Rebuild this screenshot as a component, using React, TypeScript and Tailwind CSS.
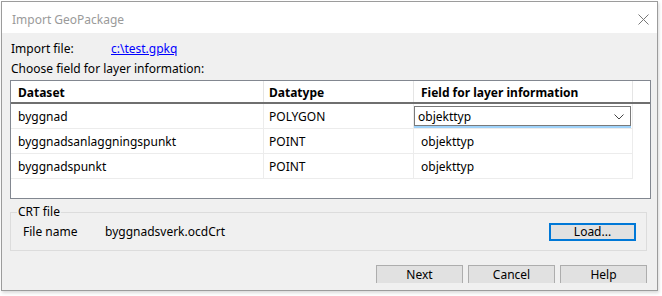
import React from "react";

const rows = [
  { name: "byggnad", type: "POLYGON", field: "objekttyp" },
  { name: "byggnadsanlaggningspunkt", type: "POINT", field: "objekttyp" },
  { name: "byggnadspunkt", type: "POINT", field: "objekttyp" },
];

function Chevron() {
  return (
    <svg width="10" height="6" viewBox="0 0 10 6" fill="none">
      <path d="M0.5 0.5 L5 5 L9.5 0.5" stroke="#444" strokeWidth="1" />
    </svg>
  );
}

function CloseIcon() {
  return (
    <svg width="11" height="11" viewBox="0 0 11 11" fill="none">
      <path d="M0.5 0.5 L10.5 10.5 M10.5 0.5 L0.5 10.5" stroke="#777" strokeWidth="1" />
    </svg>
  );
}

export default function App() {
  return (
    <div
      className="w-[662px] h-[296px] bg-white pl-[1px] pt-[1px] text-[12px] leading-[16px] text-black"
      style={{ fontFamily: '"Segoe UI", "Noto Sans", sans-serif' }}
    >
      <div className="w-[657px] h-[290px] border border-[#9c9c9c] flex flex-col shadow-[1px_2px_3px_rgba(0,0,0,0.15)]">
        {/* Title bar */}
        <div className="h-[31px] bg-white flex justify-between shrink-0">
          <div className="pl-[10px] pt-[10px] text-[#9a9a9a]">Import GeoPackage</div>
          <div className="pr-[8px] pt-[12px]">
            <CloseIcon />
          </div>
        </div>

        {/* Body */}
        <div className="flex-1 bg-[#f0f0f0] flex flex-col overflow-hidden">
          <div className="flex pl-[9px] pt-[8px]">
            <span className="w-[100px]">Import file:</span>
            <span className="text-[#0000ff] underline">c:\test.gpkq</span>
          </div>
          <div className="pl-[9px] mt-[4px]">Choose field for layer information:</div>

          {/* Table */}
          <div className="ml-[8px] mt-[3px] w-[641px] h-[119px] border border-[#828790] bg-white flex flex-col">
            <div className="flex h-[23px] border-b-2 border-[#6f6f6f] font-bold">
              <div className="w-[253px] border-r border-[#e5e5e5] pl-[7px] pt-[3px] flex items-center">Dataset</div>
              <div className="w-[150px] border-r border-[#e5e5e5] pl-[5px] pt-[3px] flex items-center">Datatype</div>
              <div className="w-[219px] border-r border-[#e5e5e5] pl-[7px] pt-[3px] flex items-center">
                Field for layer information
              </div>
              <div className="flex-1" />
            </div>
            {rows.map((r, i) => (
              <div key={r.name} className="flex h-[25px]">
                <div className="w-[253px] border-r border-b border-[#ececec] pl-[7px] pt-[2px] flex items-center">{r.name}</div>
                <div className="w-[150px] border-r border-b border-[#ececec] pl-[5px] pt-[2px] flex items-center">{r.type}</div>
                {i === 0 ? (
                  <div className="w-[219px] border-r border-b border-[#ececec] flex flex-col">
                    <div className="w-[217px] h-[20px] mt-[2px] border border-[#7a7a7a] bg-white flex items-center justify-between pl-[3px] pr-[6px] pt-[1px]">
                      <span>{r.field}</span>
                      <Chevron />
                    </div>
                    <div className="w-[217px] h-[2px] bg-[#9fd3fb]" />
                  </div>
                ) : (
                  <div className="w-[219px] border-r border-b border-[#ececec] pl-[7px] pt-[2px] flex items-center">{r.field}</div>
                )}
                <div className="flex-1" />
              </div>
            ))}
          </div>

          {/* CRT file group */}
          <fieldset className="ml-[8px] mt-[5px] w-[637px] border border-[#dcdcdc] pl-[12px] pr-[10px] pb-[9px]">
            <legend className="-ml-[6px] px-[1px]">CRT file</legend>
            <div className="flex items-center h-[18px] mt-[3px]">
              <span className="w-[82px]">File name</span>
              <span className="flex-1">byggnadsverk.ocdCrt</span>
              <button className="w-[87px] h-[18px] bg-[#e1e1e1] border-2 border-[#0078d7] flex items-center justify-center">
                Load...
              </button>
            </div>
          </fieldset>

          {/* Buttons */}
          <div className="flex justify-end gap-[5px] pr-[10px] mt-[14px]">
            {["Next", "Cancel", "Help"].map((b) => (
              <button
                key={b}
                className="w-[87px] h-[18px] bg-[#e1e1e1] border border-b-0 border-[#adadad] flex items-center justify-center pt-[1px]"
              >
                {b}
              </button>
            ))}
          </div>
        </div>
      </div>
    </div>
  );
}
